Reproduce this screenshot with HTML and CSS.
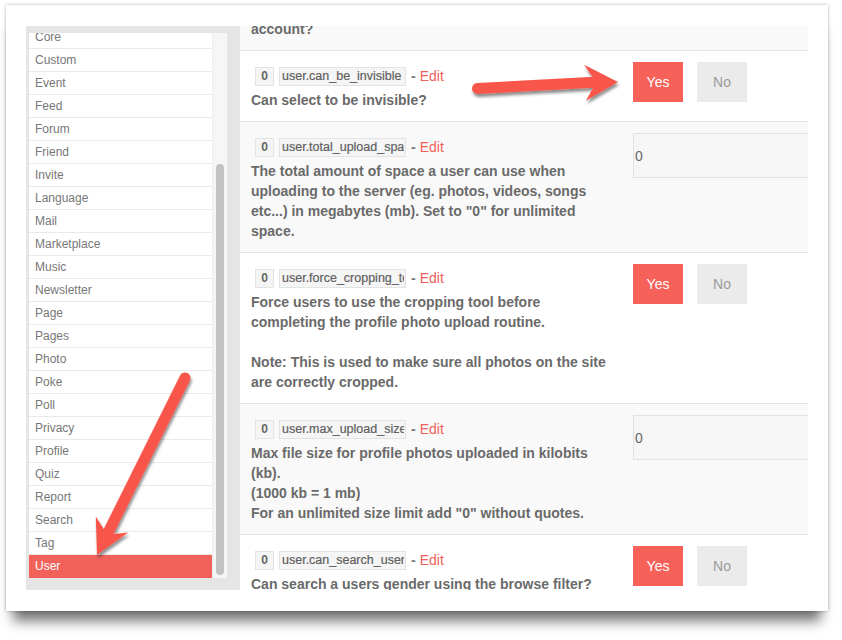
FILE: index.html
```html
<!DOCTYPE html>
<html>
<head>
<meta charset="utf-8">
<link rel="stylesheet" href="styles.css">
</head>
<body>
<div class="card">
  <aside class="sidebar">
    <div class="list-wrap">
      <ul class="list">
        <li>Core</li><li>Custom</li><li>Event</li><li>Feed</li><li>Forum</li><li>Friend</li>
        <li>Invite</li><li>Language</li><li>Mail</li><li>Marketplace</li><li>Music</li><li>Newsletter</li>
        <li>Page</li><li>Pages</li><li>Photo</li><li>Poke</li><li>Poll</li><li>Privacy</li>
        <li>Profile</li><li>Quiz</li><li>Report</li><li>Search</li><li>Tag</li><li class="active">User</li>
      </ul>
      <div class="track"><div class="thumb"></div></div>
    </div>
  </aside>
  <main class="main">
    <div class="rows">
      <div class="row alt first">
        <div class="info"><div class="desc">account?</div></div>
      </div>
      <div class="row">
        <div class="info">
          <div class="meta"><span class="badge">0</span><span class="key"><span class="key-text">user.can_be_invisible</span></span><span class="sep">-</span><span class="edit">Edit</span></div>
          <div class="desc">Can select to be invisible?</div>
        </div>
        <div class="controls"><span class="btn yes">Yes</span><span class="btn no">No</span></div>
      </div>
      <div class="row alt">
        <div class="info">
          <div class="meta"><span class="badge">0</span><span class="key"><span class="key-text">user.total_upload_space</span></span><span class="sep">-</span><span class="edit">Edit</span></div>
          <div class="desc">The total amount of space a user can use when<br>uploading to the server (eg. photos, videos, songs<br>etc...) in megabytes (mb). Set to "0" for unlimited<br>space.</div>
        </div>
        <div class="controls"><span class="field">0</span></div>
      </div>
      <div class="row">
        <div class="info">
          <div class="meta"><span class="badge">0</span><span class="key"><span class="key-text">user.force_cropping_tool</span></span><span class="sep">-</span><span class="edit">Edit</span></div>
          <div class="desc">Force users to use the cropping tool before<br>completing the profile photo upload routine.<br><br>Note: This is used to make sure all photos on the site<br>are correctly cropped.</div>
        </div>
        <div class="controls"><span class="btn yes">Yes</span><span class="btn no">No</span></div>
      </div>
      <div class="row alt">
        <div class="info">
          <div class="meta"><span class="badge">0</span><span class="key"><span class="key-text">user.max_upload_size_photos</span></span><span class="sep">-</span><span class="edit">Edit</span></div>
          <div class="desc">Max file size for profile photos uploaded in kilobits<br>(kb).<br>(1000 kb = 1 mb)<br>For an unlimited size limit add "0" without quotes.</div>
        </div>
        <div class="controls"><span class="field">0</span></div>
      </div>
      <div class="row">
        <div class="info">
          <div class="meta"><span class="badge">0</span><span class="key"><span class="key-text">user.can_search_user_gender</span></span><span class="sep">-</span><span class="edit">Edit</span></div>
          <div class="desc">Can search a users gender using the browse filter?</div>
        </div>
        <div class="controls"><span class="btn yes">Yes</span><span class="btn no">No</span></div>
      </div>
    </div>
  </main>
</div>
<svg class="arrows" width="842" height="640" viewBox="0 0 842 640" xmlns="http://www.w3.org/2000/svg">
  <defs>
    <filter id="sh" x="-20%" y="-20%" width="140%" height="140%">
      <feDropShadow dx="1" dy="3" stdDeviation="1.8" flood-color="#000" flood-opacity="0.45"/>
    </filter>
  </defs>
  <g filter="url(#sh)" fill="#f8574b" stroke="#f8574b">
    <line x1="477.5" y1="88.5" x2="594" y2="82.3" stroke-width="11" stroke-linecap="round"/>
    <polygon stroke="none" points="618,82 585.9,100.7 593.3,87.3 592.8,77.3 584.1,64.8"/>
    <line x1="185" y1="378" x2="108.5" y2="531.7" stroke-width="11" stroke-linecap="round"/>
    <polygon stroke="none" points="97,555 128.2,532.4 113,533.9 104,529.5 95.8,516.6"/>
  </g>
</svg>
</body>
</html>
```
FILE: styles.css
```css
* { box-sizing: border-box; }
body {
  margin: 0;
  background: #fff;
  font-family: "Liberation Sans", Arial, Helvetica, sans-serif;
  position: relative;
  width: 842px;
  height: 640px;
  overflow: hidden;
}
.card {
  display: flex;
  width: 822px;
  height: 606px;
  margin: 5px 0 0 6px;
  padding: 21px 20px;
  background: #fff;
  box-shadow: 0 0 3px rgba(0,0,0,0.3), 0 17px 12px -7px rgba(0,0,0,0.55);
}
.sidebar {
  flex: none;
  width: 214px;
  height: 564px;
  background: #e5e5e5;
  padding: 7px 13px 12px 3px;
}
.list-wrap {
  display: flex;
  height: 545px;
  overflow: hidden;
}
.list {
  width: 183px;
  margin: -7px 0 0 0;
  padding: 0;
  list-style: none;
  background: #fff;
}
.list li {
  height: 23px;
  line-height: 22px;
  border-bottom: 1px solid #e9e9e9;
  padding-left: 6px;
  font-size: 12px;
  color: #777;
}
.list li.active {
  background: #f2625b;
  color: #fff;
  border-bottom-color: #f2625b;
}
.track {
  width: 15px;
  background: #f6f6f6;
  border-left: 1px solid #ececec;
}
.thumb {
  width: 8px;
  height: 411px;
  margin: 131px 0 0 3px;
  border-radius: 4px;
  background: #c2c2c2;
}
.main {
  flex: 1;
  height: 564px;
  overflow: hidden;
  background: #fff;
}
.rows { margin-top: -7px; }
.row {
  display: flex;
  gap: 10px;
  padding: 11px;
  border-bottom: 1px solid #e4e4e4;
}
.row.first { padding-top: 0; }
.row.alt { background: #f9f9f9; }
.info { flex: none; width: 372px; }
.meta {
  height: 28px;
  display: flex;
  align-items: center;
}
.badge {
  margin-left: 4px;
  width: 19px;
  height: 19px;
  border: 1px solid #e3e3e3;
  background: #f5f5f5;
  font-size: 12px;
  font-weight: bold;
  color: #666;
  display: flex;
  align-items: center;
  justify-content: center;
}
.key {
  margin-left: 5px;
  width: 127px;
  height: 19px;
  border: 1px solid #e3e3e3;
  background: #f5f5f5;
  padding: 0 0 0 2px;
  overflow: hidden;
}
.key-text {
  display: block;
  width: 122px;
  overflow: hidden;
  white-space: nowrap;
  font-size: 12.5px;
  line-height: 17px;
  color: #5f5f5f;
  -webkit-text-stroke: 0.2px #5f5f5f;
}
.sep {
  margin-left: 5px;
  font-size: 14px;
  font-weight: bold;
  color: #777;
}
.edit {
  margin-left: 4px;
  font-size: 14px;
  color: #f0605a;
}
.desc {
  font-size: 14px;
  font-weight: bold;
  line-height: 20px;
  color: #6a6a6a;
  white-space: nowrap;
}
.controls {
  flex: none;
  display: flex;
  gap: 14px;
  align-items: flex-start;
}
.btn {
  width: 50px;
  height: 40px;
  display: flex;
  align-items: center;
  justify-content: center;
  font-size: 14px;
}
.yes { background: #f6625a; color: #fff; }
.no { background: #ebebeb; color: #999; }
.field {
  width: 260px;
  height: 45px;
  border: 1px solid #e2e2e2;
  background: #f6f6f6;
  padding-left: 1px;
  display: flex;
  align-items: center;
  font-size: 14px;
  color: #666;
}
.arrows {
  position: absolute;
  top: 0;
  left: 0;
  pointer-events: none;
}
```
